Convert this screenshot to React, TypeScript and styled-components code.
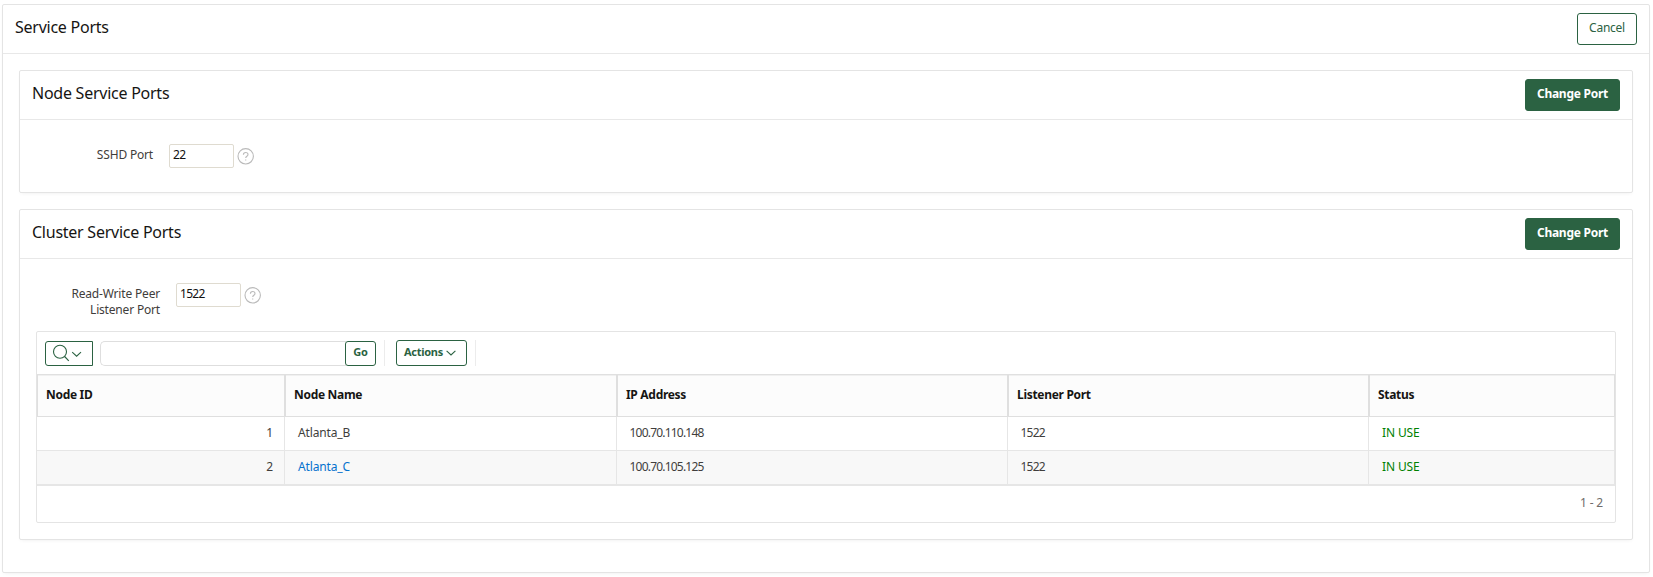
import React from 'react';
import styled, { createGlobalStyle } from 'styled-components';

const GREEN = '#2b6242';
const LINE = '#e4e4e4';

const GlobalStyle = createGlobalStyle`
  * { box-sizing: border-box; }
  body {
    margin: 0;
    background: #fff;
    color: #161513;
    font: 12px/16px "Noto Sans", "Open Sans", sans-serif;
    letter-spacing: -0.18px;
  }
`;

const Page = styled.main`
  padding: 4px 3px 4px 2px;
  height: 577px;
`;

const Panel = styled.section<{ $height: number }>`
  height: ${(p) => p.$height}px;
  background: #fff;
  border: 1px solid ${LINE};
  border-radius: 2px;
  box-shadow: 0 2px 4px -2px rgba(0, 0, 0, 0.08);
`;

const PanelHeader = styled.header`
  display: flex;
  align-items: flex-start;
  justify-content: space-between;
  height: 49px;
  padding: 8px 12px;
  border-bottom: 1px solid #e8e8e8;
`;

const Title = styled.h2`
  margin: 2px 0 0;
  font-size: 16px;
  font-weight: 400;
  line-height: 24px;
  letter-spacing: -0.25px;
`;

const PanelStack = styled.div`
  display: flex;
  flex-direction: column;
  gap: 16px;
  padding: 16px;
`;

const Button = styled.button<{ $primary?: boolean }>`
  height: 32px;
  width: ${(p) => (p.$primary ? 95 : 60)}px;
  padding: 0 0 3px;
  border: 1px solid ${GREEN};
  border-radius: 3px;
  background: ${(p) => (p.$primary ? GREEN : '#fff')};
  color: ${(p) => (p.$primary ? '#fff' : GREEN)};
  font: inherit;
  font-weight: ${(p) => (p.$primary ? 700 : 400)};
  letter-spacing: -0.25px;
`;

const Field = styled.div`
  display: flex;
  align-items: flex-start;
  padding-top: 24px;
`;

const Label = styled.label<{ $width: number }>`
  width: ${(p) => p.$width}px;
  padding: 3px 0 0 40px;
  margin-right: 16px;
  text-align: right;
  color: #3f3d3b;
`;

const PortInput = styled.input`
  width: 65px;
  height: 24px;
  margin-right: 3px;
  padding: 0 3px 3px;
  border: 1px solid #dfdbd0;
  border-radius: 2px;
  background: #fff;
  color: #111;
  font: inherit;
  letter-spacing: -0.7px;
  outline: none;
`;

const HelpIcon = styled.svg`
  width: 17px;
  height: 17px;
  margin-top: 4px;
`;

const Report = styled.div`
  height: 192px;
  margin: 13px 16px 0;
  border: 1px solid ${LINE};
  border-radius: 2px;
`;

const Toolbar = styled.div`
  display: flex;
  align-items: flex-end;
  height: 42px;
  padding: 8px 8px;
`;

const SearchMenu = styled.button`
  display: flex;
  align-items: center;
  width: 48px;
  height: 25px;
  margin-right: 7px;
  padding: 0 0 0 5px;
  border: 1px solid ${GREEN};
  border-radius: 3px 0 0 3px;
  background: #fff;
`;

const SearchInput = styled.input`
  width: 246px;
  height: 25px;
  margin-right: -1px;
  border: 1px solid #dedede;
  border-right: 0;
  border-radius: 5px 0 0 5px;
  outline: none;
`;

const ToolButton = styled.button<{ $width: number; $height: number }>`
  display: flex;
  align-items: center;
  justify-content: center;
  width: ${(p) => p.$width}px;
  height: ${(p) => p.$height}px;
  padding: 0 0 3px 0;
  border: 1px solid ${GREEN};
  border-radius: 3px;
  background: #fff;
  color: ${GREEN};
  font: inherit;
  font-size: 11px;
  font-weight: 700;
  letter-spacing: -0.27px;
`;

const ActionsChevron = styled.svg`
  width: 10px;
  height: 6px;
  margin: 3px 3px 0 3px;
`;

const Separator = styled.i<{ $left: number; $right: number }>`
  width: 1px;
  height: 26px;
  margin: 0 ${(p) => p.$right}px 0 ${(p) => p.$left}px;
  background: #ececec;
`;

const GridRow = styled.div<{ $alt?: boolean }>`
  display: grid;
  grid-template-columns: 248px 332px 391px 361px 1fr;
  height: 34px;
  background: ${(p) => (p.$alt ? '#f8f8f8' : '#fff')};
  border-bottom: 1px solid #e6e6e6;
`;

const GridHead = styled(GridRow)`
  height: 43px;
  border-top: 1px solid #e0e0e0;
  border-bottom-color: #dfdfdf;
  background: #fcfcfc;
`;

const HeadCell = styled.div`
  padding: 12px 8px;
  border-left: 1px solid #dfdfdf;
  border-right: 1px solid #dfdfdf;
  box-shadow: inset 0 1px #f0f0f0;
  font-weight: 700;
  letter-spacing: -0.3px;
`;

type Tone = 'text' | 'number' | 'digits' | 'link' | 'status';
const toneColor: Record<Tone, string> = {
  text: '#403e3c',
  number: '#403e3c',
  digits: '#403e3c',
  link: '#0572ce',
  status: '#008000',
};

const Cell = styled.div<{ $tone?: Tone }>`
  padding: 8px 11px 0 ${(p) => (p.$tone === 'digits' ? 12.5 : 13)}px;
  border-right: 1px solid #e6e6e6;
  color: ${(p) => toneColor[p.$tone ?? 'text']};
  text-align: ${(p) => (p.$tone === 'number' ? 'right' : 'left')};
  letter-spacing: ${(p) => (p.$tone === 'digits' ? -0.79 : -0.14)}px;
`;

const Pagination = styled.footer`
  padding: 9px 12px 0;
  border-top: 1px solid #e6e6e6;
  text-align: right;
  color: #6f6d6b;
`;

function Help() {
  return (
    <HelpIcon viewBox="0 0 17 17" fill="none" stroke="#bababa" strokeWidth="1.1">
      <circle cx="8.7" cy="8.3" r="7.7" />
      <path d="M6.4 6.7c0-1.4 1-2.2 2.3-2.2s2.3.8 2.3 2c0 1.8-2.3 1.8-2.3 3.6" />
      <path d="M8.7 11.5v1.1" />
    </HelpIcon>
  );
}

const columns = ['Node ID', 'Node Name', 'IP Address', 'Listener Port', 'Status'];
const nodes = [
  { id: 1, name: 'Atlanta_B', ip: '100.70.110.148', port: '1522', status: 'IN USE', link: false },
  { id: 2, name: 'Atlanta_C', ip: '100.70.105.125', port: '1522', status: 'IN USE', link: true },
];

export default function App() {
  return (
    <Page>
      <GlobalStyle />
      <Panel $height={569}>
        <PanelHeader>
          <Title>Service Ports</Title>
          <Button>Cancel</Button>
        </PanelHeader>
        <PanelStack>
          <Panel $height={123}>
            <PanelHeader>
              <Title>Node Service Ports</Title>
              <Button $primary>Change Port</Button>
            </PanelHeader>
            <Field>
              <Label $width={133}>SSHD Port</Label>
              <PortInput defaultValue="22" />
              <Help />
            </Field>
          </Panel>
          <Panel $height={331}>
            <PanelHeader>
              <Title>Cluster Service Ports</Title>
              <Button $primary>Change Port</Button>
            </PanelHeader>
            <Field>
              <Label $width={140}>Read-Write Peer Listener Port</Label>
              <PortInput defaultValue="1522" />
              <Help />
            </Field>
            <Report>
              <Toolbar>
                <SearchMenu aria-label="Search columns">
                  <svg width="34" height="23" viewBox="0 0 34 23" fill="none" stroke={GREEN} strokeWidth="1.1">
                    <circle cx="9" cy="9.7" r="6.5" />
                    <path d="M13.6 14.5l4.2 4.4" />
                    <path d="M21.2 10.2l4.4 4 4.4-4" />
                  </svg>
                </SearchMenu>
                <SearchInput aria-label="Search" />
                <ToolButton $width={31} $height={25}>Go</ToolButton>
                <Separator $left={8} $right={11} />
                <ToolButton $width={71} $height={26}>
                  Actions
                  <ActionsChevron viewBox="0 0 10 6" fill="none" stroke={GREEN} strokeWidth="1.1">
                    <path d="M.6.8L5 5 9.4.8" />
                  </ActionsChevron>
                </ToolButton>
                <Separator $left={8} $right={0} />
              </Toolbar>
              <GridHead>
                {columns.map((c) => (
                  <HeadCell key={c}>{c}</HeadCell>
                ))}
              </GridHead>
              {nodes.map((n) => (
                <GridRow key={n.id} $alt={n.id % 2 === 0}>
                  <Cell $tone="number">{n.id}</Cell>
                  <Cell $tone={n.link ? 'link' : 'text'}>{n.name}</Cell>
                  <Cell $tone="digits">{n.ip}</Cell>
                  <Cell $tone="digits">{n.port}</Cell>
                  <Cell $tone="status">{n.status}</Cell>
                </GridRow>
              ))}
              <Pagination>1 - 2</Pagination>
            </Report>
          </Panel>
        </PanelStack>
      </Panel>
    </Page>
  );
}
